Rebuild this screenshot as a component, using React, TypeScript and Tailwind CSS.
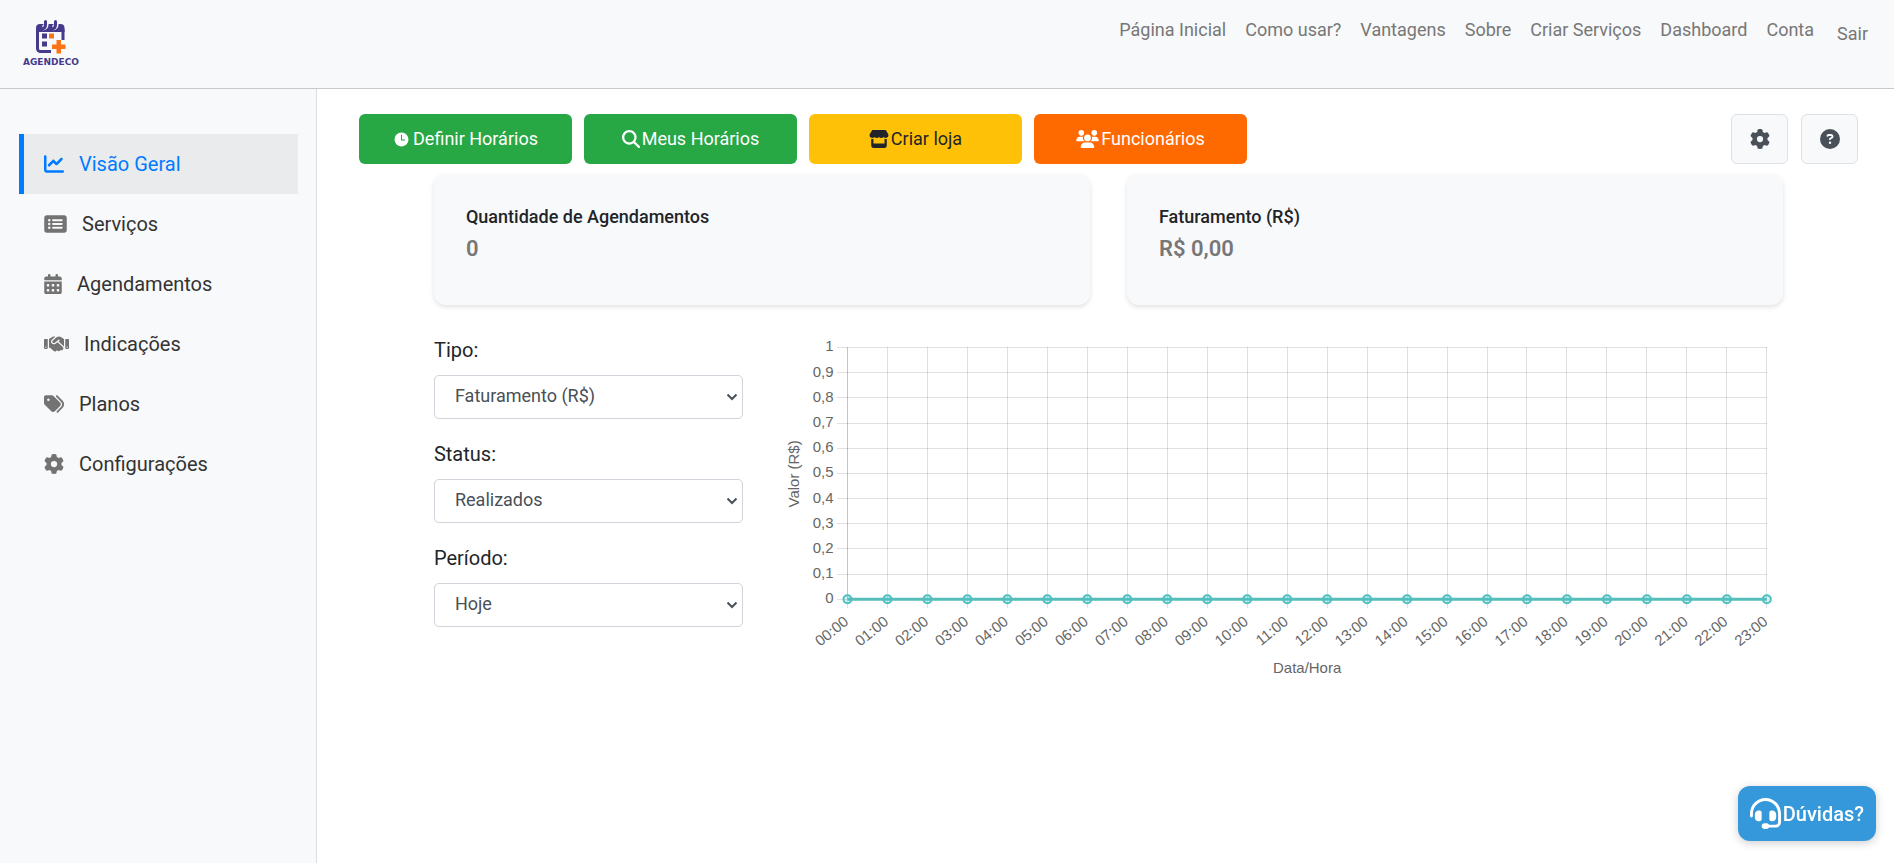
import type { ComponentType, ReactNode } from "react";
import {
  FaCalendarDays,
  FaChartLine,
  FaCircleQuestion,
  FaGear,
  FaHandshake,
  FaHeadset,
  FaMagnifyingGlass,
  FaRectangleList,
  FaStore,
  FaTags,
  FaUsers,
} from "react-icons/fa6";
import { IoTime } from "react-icons/io5";

type Icon = ComponentType<{ className?: string; "aria-hidden"?: boolean }>;

function Logo() {
  return (
    <a href="#" aria-label="Agendeco" className="flex flex-col items-center">
      <svg viewBox="0 0 32 34" className="h-[34px] w-8" aria-hidden="true">
        <path
          d="M2.500 9V28.500a3 3 0 0 0 3 3H16M28 9V20"
          fill="none"
          stroke="#453a8c"
          strokeWidth="3"
        />
        <path d="M1 12V8a4 4 0 0 1 4-4H25.500a4 4 0 0 1 4 4v4z" fill="#453a8c" />
        <path
          d="M11 0v4.500q0 3-3.500 3.500M21 0v4.500q0 3-3.500 3.500"
          fill="none"
          stroke="#f8f9fa"
          strokeWidth="5"
        />
        <path
          d="M10.500 1.500v3.500q0 3-3 4M20.500 1.500v3.500q0 3-3 4"
          fill="none"
          stroke="#453a8c"
          strokeWidth="3"
          strokeLinecap="round"
        />
        <rect x="7" y="13.500" width="5" height="5" fill="#453a8c" />
        <rect x="14" y="13.500" width="5" height="5" fill="#fb7415" />
        <rect x="7" y="21.500" width="5" height="5" fill="#453a8c" />
        <path d="M21.500 20h4.500v4.500h4.500V29H26v4.500h-4.500V29H17v-4.500h4.500z" fill="#fb7415" />
      </svg>
      <span className="mt-0.5 font-['DejaVu_Sans',sans-serif] text-[9px] leading-3 font-bold text-[#453a8c]">
        AGENDECO
      </span>
    </a>
  );
}

const navLinks = ["Página Inicial", "Como usar?", "Vantagens", "Sobre", "Criar Serviços", "Dashboard", "Conta"];

function Header() {
  return (
    <header className="flex h-[89px] items-start justify-between border-b border-[#c8c9ca] bg-[#f8f9fa] pr-[26px] pl-[23px]">
      <div className="pt-5">
        <Logo />
      </div>
      <nav className="flex items-start gap-[19px] pt-4 text-lg leading-7 text-[#777777]">
        {navLinks.map((label) => (
          <a key={label} href="#">
            {label}
          </a>
        ))}
        <button type="button" className="mt-1 ml-1">
          Sair
        </button>
      </nav>
    </header>
  );
}

const menu: { label: string; icon: Icon; size: string; active?: boolean }[] = [
  { label: "Visão Geral", icon: FaChartLine, size: "h-5 w-5", active: true },
  { label: "Serviços", icon: FaRectangleList, size: "h-5 w-[23px]" },
  { label: "Agendamentos", icon: FaCalendarDays, size: "h-5 w-[18px]" },
  { label: "Indicações", icon: FaHandshake, size: "h-5 w-[25px]" },
  { label: "Planos", icon: FaTags, size: "h-5 w-5" },
  { label: "Configurações", icon: FaGear, size: "h-5 w-5" },
];

function Sidebar() {
  return (
    <aside className="w-[317px] shrink-0 border-r border-[#dcdddf] bg-[#f8f9fa] pt-[45px] pr-[18px] pl-[19px]">
      <ul>
        {menu.map(({ label, icon: ItemIcon, size, active }) => (
          <li key={label}>
            <a
              href="#"
              className={
                active
                  ? "flex h-[60px] items-center gap-[15px] border-l-[5px] border-[#007bff] bg-[#e9ebec] pl-5 text-xl text-[#007bff]"
                  : "flex h-[60px] items-center gap-[15px] border-l-[5px] border-transparent pl-5 text-xl text-[#333333]"
              }
            >
              <ItemIcon aria-hidden className={active ? size : `${size} text-[#737373]`} />
              {label}
            </a>
          </li>
        ))}
      </ul>
    </aside>
  );
}

function ActionButton({ className, children }: { className: string; children: ReactNode }) {
  return (
    <button
      type="button"
      className={`flex h-[50px] w-[213px] items-center justify-center rounded-md text-lg ${className}`}
    >
      {children}
    </button>
  );
}

function IconButton({ label, icon: ButtonIcon }: { label: string; icon: Icon }) {
  return (
    <button
      type="button"
      aria-label={label}
      className="flex h-[50px] w-[57px] items-center justify-center rounded-md border border-[#dee2e6] bg-[#f8f9fa] text-[#495057]"
    >
      <ButtonIcon aria-hidden className="size-5" />
    </button>
  );
}

function Toolbar() {
  return (
    <div className="flex items-center justify-between">
      <div className="flex gap-3">
        <ActionButton className="gap-[3px] bg-[#28a745] text-white">
          <IoTime aria-hidden className="size-[17px]" />
          Definir Horários
        </ActionButton>
        <ActionButton className="gap-0.5 bg-[#28a745] text-white">
          <FaMagnifyingGlass aria-hidden className="size-[18px]" />
          Meus Horários
        </ActionButton>
        <ActionButton className="gap-0.5 bg-[#ffc107] text-[#212529]">
          <FaStore aria-hidden className="h-[18px] w-5" />
          Criar loja
        </ActionButton>
        <ActionButton className="gap-0.5 bg-[#ff6a00] text-white">
          <FaUsers aria-hidden className="h-[18px] w-[23px]" />
          Funcionários
        </ActionButton>
      </div>
      <div className="flex gap-[13px]">
        <IconButton label="Configurações" icon={FaGear} />
        <IconButton label="Ajuda" icon={FaCircleQuestion} />
      </div>
    </div>
  );
}

function StatCard({ title, value }: { title: string; value: string }) {
  return (
    <section className="h-[131px] rounded-xl bg-[#f8f9fb] px-8 pt-[29px] shadow-[0_2px_5px_rgba(0,0,0,0.12)]">
      <h2 className="text-lg leading-7 font-medium text-[#212529]">{title}</h2>
      <p className="text-[22px] leading-9 font-semibold text-[#777777]">{value}</p>
    </section>
  );
}

function Field({ id, label, options }: { id: string; label: string; options: string[] }) {
  return (
    <div>
      <label htmlFor={id} className="block text-xl leading-[30px] text-[#212529]">
        {label}
      </label>
      <div className="relative mt-[10px]">
        <select
          id={id}
          className="block h-11 w-full appearance-none rounded-[5px] border border-[#ced4da] bg-white pr-10 pb-0.5 pl-5 text-lg text-[#495057]"
        >
          {options.map((option) => (
            <option key={option}>{option}</option>
          ))}
        </select>
        <svg
          viewBox="0 0 12 8"
          aria-hidden="true"
          className="pointer-events-none absolute top-[18px] right-[5px] h-2 w-3 text-[#495057]"
        >
          <path d="M1.500 1.500 6 6l4.500-4.500" fill="none" stroke="currentColor" strokeWidth="2" />
        </svg>
      </div>
    </div>
  );
}

const hours = Array.from({ length: 24 }, (_, i) => `${String(i).padStart(2, "0")}:00`);
const ticks = ["1", "0,9", "0,8", "0,7", "0,6", "0,5", "0,4", "0,3", "0,2", "0,1", "0"];
const LEFT = 67.5;
const TOP = 16.5;
const STEP_X = 40;
const STEP_Y = 25.2;
const RIGHT = LEFT + STEP_X * 23;
const BOTTOM = TOP + STEP_Y * 10;

function Chart() {
  return (
    <svg
      viewBox="0 0 1004 350"
      role="img"
      aria-label="Valor (R$) por Data/Hora"
      className="h-auto w-full font-['Liberation_Sans',Arial,sans-serif] text-[15px]"
    >
      <g stroke="#000000" strokeOpacity="0.12" shapeRendering="crispEdges">
        {ticks.map((tick, i) => (
          <line key={tick} x1={LEFT - 10} x2={RIGHT} y1={TOP + i * STEP_Y} y2={TOP + i * STEP_Y} />
        ))}
        {hours.map((hour, i) => (
          <line key={hour} x1={LEFT + i * STEP_X} x2={LEFT + i * STEP_X} y1={TOP} y2={BOTTOM + 9} />
        ))}
        <line x1={LEFT} x2={LEFT} y1={TOP} y2={BOTTOM} />
      </g>
      <g fill="#666666">
        {ticks.map((tick, i) => (
          <text key={tick} x={LEFT - 14} y={TOP + i * STEP_Y + 4} textAnchor="end">
            {tick}
          </text>
        ))}
        {hours.map((hour, i) => (
          <text
            key={hour}
            textAnchor="end"
            transform={`translate(${LEFT + i * STEP_X + 2} ${BOTTOM + 24}) rotate(-39)`}
          >
            {hour}
          </text>
        ))}
        <text textAnchor="middle" transform="translate(19 143) rotate(-90)">
          Valor (R$)
        </text>
        <text x={(LEFT + RIGHT) / 2} y="342" textAnchor="middle">
          Data/Hora
        </text>
      </g>
      <g stroke="#4bc0c0" strokeWidth="2">
        <line x1={LEFT} x2={RIGHT} y1={BOTTOM} y2={BOTTOM} strokeWidth="3" stroke="#56bdbd" />
        {hours.map((hour, i) => (
          <circle key={hour} cx={LEFT + i * STEP_X} cy={BOTTOM} r="4" fill="#4bc0c0" fillOpacity="0.2" />
        ))}
      </g>
    </svg>
  );
}

export default function App() {
  return (
    <div className="flex min-h-screen flex-col bg-white font-[Roboto,sans-serif]">
      <Header />
      <div className="flex flex-1">
        <Sidebar />
        <main className="min-w-0 flex-1 pt-[25px] pr-9 pl-[42px]">
          <Toolbar />
          <div className="mx-auto mt-[10px] w-[90%]">
            <div className="grid grid-cols-2 gap-[37px]">
              <StatCard title="Quantidade de Agendamentos" value="0" />
              <StatCard title="Faturamento (R$)" value="R$ 0,00" />
            </div>
            <div className="mt-[26px] grid grid-cols-[309fr_1004fr] gap-[37px]">
              <form className="flex flex-col gap-5 pt-1">
                <Field id="tipo" label="Tipo:" options={["Faturamento (R$)", "Agendamentos"]} />
                <Field id="status" label="Status:" options={["Realizados", "Pendentes"]} />
                <Field id="periodo" label="Período:" options={["Hoje", "Semana", "Mês"]} />
              </form>
              <Chart />
            </div>
          </div>
        </main>
      </div>
      <button
        type="button"
        className="fixed right-[18px] bottom-[22px] flex h-[55px] items-center gap-0.5 rounded-xl bg-[#3498db] px-3 text-xl font-medium text-white shadow-[0_2px_10px_rgba(0,0,0,0.2)]"
      >
        <FaHeadset aria-hidden className="size-[31px]" />
        Dúvidas?
      </button>
    </div>
  );
}
